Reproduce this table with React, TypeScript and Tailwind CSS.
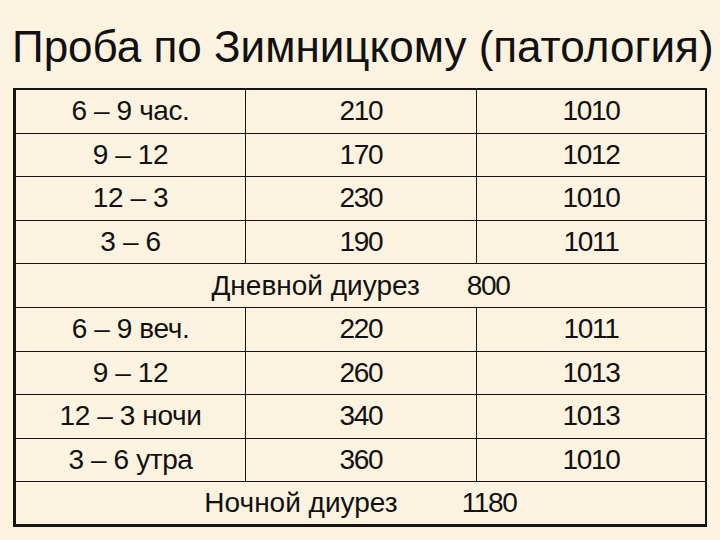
const dayRows = [
  { a: "6 – 9 час.", b: "210", c: "1010" },
  { a: "9 – 12", b: "170", c: "1012" },
  { a: "12 – 3", b: "230", c: "1010" },
  { a: "3 – 6", b: "190", c: "1011" },
];

const nightRows = [
  { a: "6 – 9 веч.", b: "220", c: "1011" },
  { a: "9 – 12", b: "260", c: "1013" },
  { a: "12 – 3 ночи", b: "340", c: "1013" },
  { a: "3 – 6 утра", b: "360", c: "1010" },
];

function DataRow({ a, b, c }: { a: string; b: string; c: string }) {
  return (
    <div className="grid h-[43.6px] grid-cols-[230px_231px_1fr] border-b border-[#141414]">
      <div className="flex items-center justify-center border-r border-[#141414] tracking-[-0.4px]">{a}</div>
      <div className="flex items-center justify-center border-r border-[#141414] tracking-[-1.3px]">{b}</div>
      <div className="flex items-center justify-center tracking-[-1.3px]">{c}</div>
    </div>
  );
}

export default function App() {
  return (
    <div className="h-[540px] w-[720px] overflow-hidden bg-[#fbf2df] font-['Liberation_Sans',Arial,sans-serif] text-[#111]">
      <h1 className="h-[88px] pl-[12px] pt-[25px] text-[44px] leading-none font-normal whitespace-nowrap">
        Проба по Зимницкому (патология)
      </h1>

      <div className="ml-[13px] w-[694px] border-t-2 border-r-2 border-b-[3px] border-l-[3px] border-[#141414] text-[28px] leading-none">
        {dayRows.map((r) => (
          <DataRow key={r.a} a={r.a} b={r.b} c={r.c} />
        ))}
        <div className="flex h-[43.6px] items-center justify-center border-b border-[#141414]">
          <span>Дневной диурез</span>
          <span className="ml-[47px] tracking-[-1.3px]">800</span>
        </div>
        {nightRows.map((r) => (
          <DataRow key={r.a + r.b} a={r.a} b={r.b} c={r.c} />
        ))}
        <div className="flex h-[42px] items-center justify-center">
          <span>Ночной диурез</span>
          <span className="ml-[64px] tracking-[-1.3px]">1180</span>
        </div>
      </div>
    </div>
  );
}
